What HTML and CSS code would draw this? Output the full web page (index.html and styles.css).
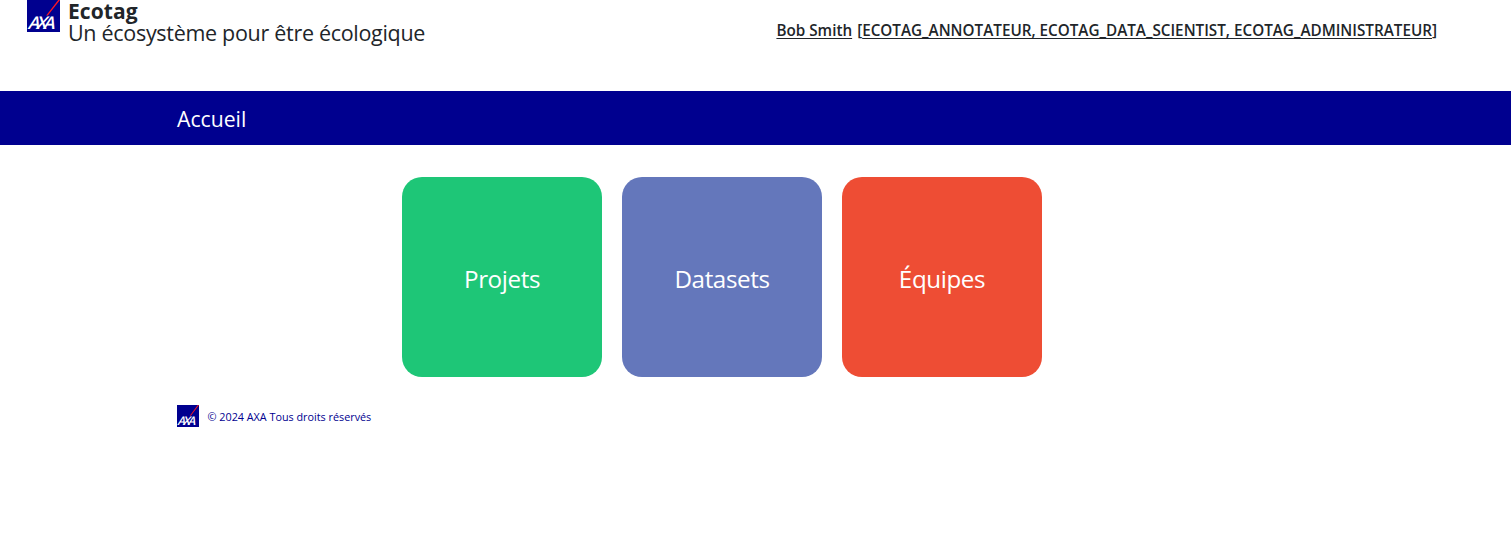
FILE: index.html
```html
<!DOCTYPE html>
<html lang="fr">
<head>
<meta charset="utf-8">
<title>Ecotag</title>
<link rel="stylesheet" href="styles.css">
</head>
<body>
<header class="header">
  <a class="brand" href="#">
    <svg class="brand-logo" viewBox="0 0 33 32" role="img" aria-label="AXA">
      <rect width="33" height="32" fill="#00008f"/>
      <path d="M19.2 15.6 31.2 0H33L20.8 15.6z" fill="#ff1721"/>
      <text class="logo-text" transform="translate(0.4 28.8) skewX(-16)" textLength="27" lengthAdjust="spacing">AXA</text>
    </svg>
    <span class="brand-text">
      <strong class="brand-title">Ecotag</strong>
      <span class="brand-subtitle">Un écosystème pour être écologique</span>
    </span>
  </a>
  <div class="user"><span class="user-name">Bob Smith</span><span class="user-roles">[<span class="user-role-list">ECOTAG_ANNOTATEUR, ECOTAG_DATA_SCIENTIST, ECOTAG_ADMINISTRATEUR</span>]</span></div>
</header>
<nav class="nav"><a class="nav-link" href="#">Accueil</a></nav>
<main class="tiles">
  <a class="tile tile-projects" href="#"><span>Projets</span></a>
  <a class="tile tile-datasets" href="#"><span>Datasets</span></a>
  <a class="tile tile-teams" href="#"><span>Équipes</span></a>
</main>
<footer class="footer">
  <svg class="footer-logo" viewBox="0 0 33 32" preserveAspectRatio="none" role="img" aria-label="AXA">
    <rect width="33" height="32" fill="#00008f"/>
    <path d="M19.2 15.6 31.2 0H33L20.8 15.6z" fill="#ff1721"/>
    <text class="logo-text" transform="translate(0.4 28.8) skewX(-16)" textLength="27" lengthAdjust="spacing">AXA</text>
  </svg>
  <span class="copyright">© 2024 AXA Tous droits réservés</span>
</footer>
</body>
</html>
```
FILE: styles.css
```css
* { box-sizing: border-box; }
body {
  margin: 0;
  background: #fff;
  color: #212529;
  font-family: "Segoe UI", "Open Sans", "Noto Sans", sans-serif;
}
a { color: inherit; text-decoration: none; }
.header {
  display: flex;
  justify-content: space-between;
  height: 91px;
  padding: 0 74px 0 27px;
}
.brand { display: flex; gap: 8px; }
.brand-logo { width: 33px; height: 32px; }
.logo-text {
  font: 600 17.5px "Open Sans", sans-serif;
  fill: #fff;
}
.brand-text { display: flex; flex-direction: column; white-space: nowrap; }
.brand-title { font-size: 21px; line-height: 22px; font-weight: 700; letter-spacing: 0.1px; }
.brand-subtitle { font-size: 21.5px; line-height: 22px; letter-spacing: -0.3px; }
.user {
  display: flex;
  gap: 5px;
  padding-top: 19px;
  font-size: 15.25px;
  line-height: 22px;
  font-weight: 600;
  white-space: nowrap;
}
.user-name, .user-role-list {
  text-decoration: underline 1px;
  text-underline-offset: 2px;
}
.nav {
  display: flex;
  align-items: center;
  height: 54px;
  padding: 2px 177px 0;
  background: #00008f;
}
.nav-link { color: #fff; font-size: 21.2px; line-height: 30px; }
.tiles {
  display: flex;
  gap: 20px;
  padding: 32px 0 28px 402px;
}
.tile {
  display: flex;
  align-items: center;
  justify-content: center;
  width: 200px;
  height: 200px;
  padding-top: 2px;
  border-radius: 20px;
  color: #fff;
  font-size: 24.2px;
  letter-spacing: -0.4px;
}
.tile-projects { background: #1ec677; }
.tile-datasets { background: #6477bb; }
.tile-teams { background: #ee4d34; }
.footer {
  display: flex;
  align-items: flex-start;
  gap: 8.5px;
  padding-left: 177px;
  color: #00008f;
}
.footer-logo { width: 22px; height: 22px; }
.copyright { font-size: 10.8px; line-height: 22px; padding-top: 1px; font-weight: 500; }
```
